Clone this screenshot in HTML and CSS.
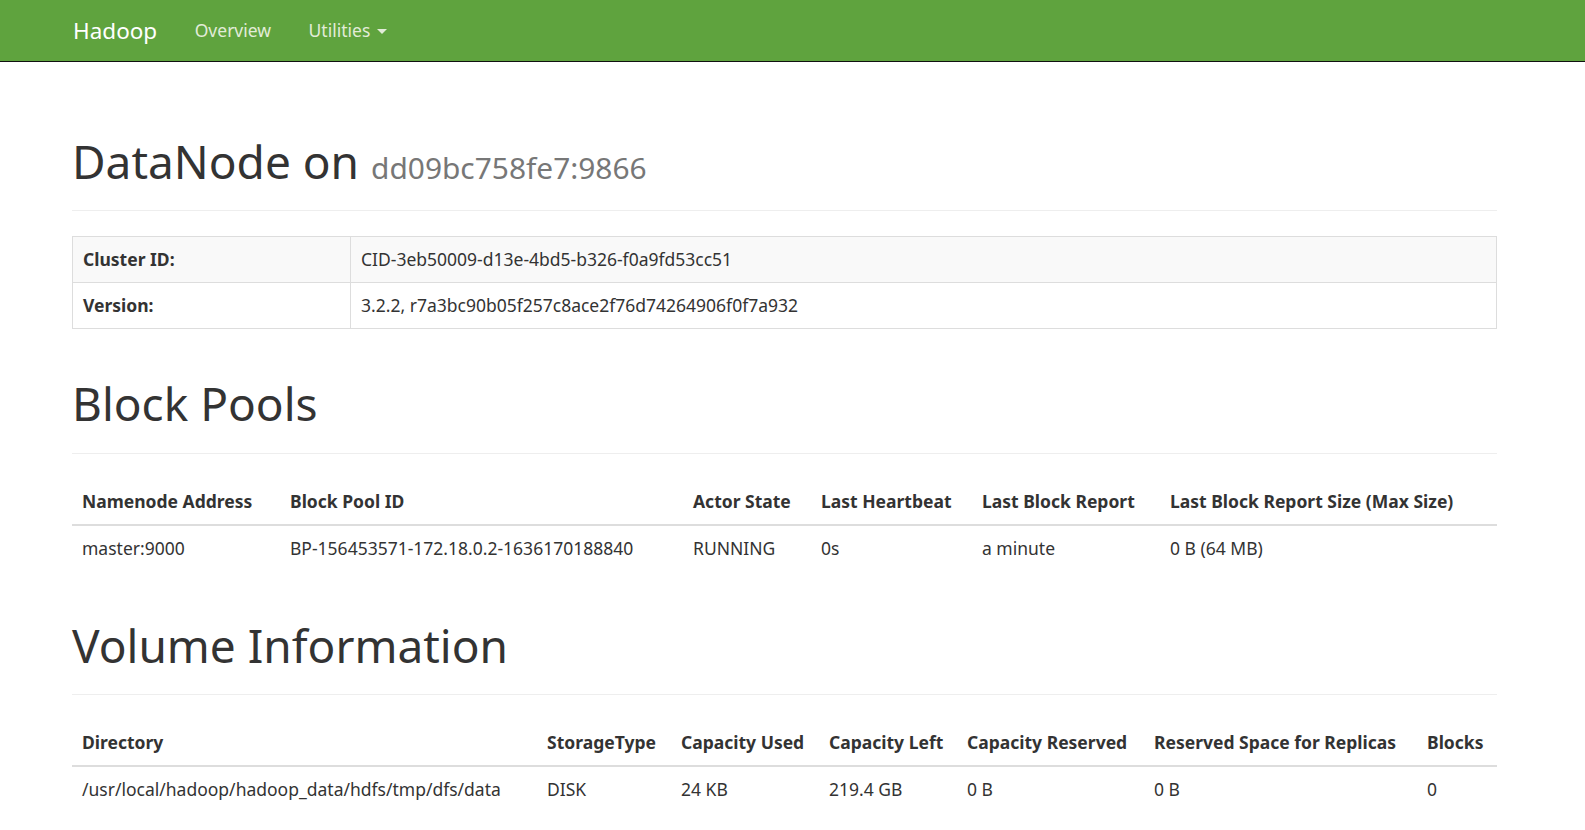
FILE: index.html
```html
<!DOCTYPE html>
<html lang="en">
<head>
<meta charset="utf-8">
<title>DataNode Information</title>
<link rel="stylesheet" href="styles.css">
</head>
<body>
<header class="navbar">
  <div class="container nav-inner">
    <a class="brand" href="#">Hadoop</a>
    <ul class="nav">
      <li><a href="#">Overview</a></li>
      <li><a href="#">Utilities <span class="caret"></span></a></li>
    </ul>
  </div>
</header>
<main class="container">
  <div class="page-header first">
    <h1>DataNode on <small>dd09bc758fe7:9866</small></h1>
  </div>
  <table class="table table-bordered table-striped info">
    <tbody>
      <tr><th class="info-key">Cluster ID:</th><td>CID-3eb50009-d13e-4bd5-b326-f0a9fd53cc51</td></tr>
      <tr><th class="info-key">Version:</th><td>3.2.2, r7a3bc90b05f257c8ace2f76d74264906f0f7a932</td></tr>
    </tbody>
  </table>

  <div class="page-header">
    <h1>Block Pools</h1>
  </div>
  <table class="table pools">
    <thead>
      <tr>
        <th class="p1">Namenode Address</th>
        <th class="p2">Block Pool ID</th>
        <th class="p3">Actor State</th>
        <th class="p4">Last Heartbeat</th>
        <th class="p5">Last Block Report</th>
        <th class="p6">Last Block Report Size (Max Size)</th>
      </tr>
    </thead>
    <tbody>
      <tr>
        <td>master:9000</td>
        <td>BP-156453571-172.18.0.2-1636170188840</td>
        <td>RUNNING</td>
        <td>0s</td>
        <td>a minute</td>
        <td>0 B (64 MB)</td>
      </tr>
    </tbody>
  </table>

  <div class="page-header">
    <h1>Volume Information</h1>
  </div>
  <table class="table volumes">
    <thead>
      <tr>
        <th class="v1">Directory</th>
        <th class="v2">StorageType</th>
        <th class="v3">Capacity Used</th>
        <th class="v4">Capacity Left</th>
        <th class="v5">Capacity Reserved</th>
        <th class="v6">Reserved Space for Replicas</th>
        <th class="v7">Blocks</th>
      </tr>
    </thead>
    <tbody>
      <tr>
        <td>/usr/local/hadoop/hadoop_data/hdfs/tmp/dfs/data</td>
        <td>DISK</td>
        <td>24 KB</td>
        <td>219.4 GB</td>
        <td>0 B</td>
        <td>0 B</td>
        <td>0</td>
      </tr>
    </tbody>
  </table>
</main>
</body>
</html>
```
FILE: styles.css
```css
* { box-sizing: border-box; }
html, body {
  margin: 0;
  padding: 0;
  background: #fff;
}
body {
  font-family: "Noto Sans", "Open Sans", "Liberation Sans", sans-serif;
  font-size: 17.5px;
  line-height: 25px;
  color: #333;
}
.container {
  width: 1425px;
  margin-left: 72px;
}
.navbar {
  background: #5fa33e;
  height: 62px;
  border-bottom: 1px solid #111;
}
.nav-inner {
  display: flex;
  align-items: center;
  height: 60px;
}
.brand {
  color: #fff;
  text-decoration: none;
  font-size: 22.5px;
  line-height: 25px;
  padding: 0 18.75px 0 1px;
}
.nav {
  display: flex;
  list-style: none;
  margin: 0;
  padding: 0;
}
.nav a {
  display: block;
  color: #e2ecd8;
  text-decoration: none;
  font-size: 17.5px;
  line-height: 25px;
  padding: 0 18.75px;
}
.caret {
  display: inline-block;
  width: 0;
  height: 0;
  margin-left: 2px;
  vertical-align: middle;
  border-top: 5px solid #e2ecd8;
  border-left: 5px solid transparent;
  border-right: 5px solid transparent;
}
.page-header {
  margin: 50px 0 25px;
  padding-bottom: 11.25px;
  border-bottom: 1px solid #eee;
}
.page-header.first {
  margin-top: 75px;
}
h1 {
  margin: 0 0 12.5px;
  font-size: 46px;
  line-height: 49.5px;
  font-weight: 400;
  color: #333;
}
h1 small {
  font-size: 65%;
  color: #777;
  font-weight: 400;
  line-height: 1;
}
.table {
  width: 100%;
  border-collapse: collapse;
  border-spacing: 0;
  margin-bottom: 25px;
}
.table th, .table td {
  padding: 10px;
  text-align: left;
  vertical-align: top;
  line-height: 25px;
}
.table th { font-weight: 700; }
.table tbody td, .table tbody th {
  border-top: 1px solid #ddd;
}
.table thead th {
  border-bottom: 2.5px solid #ddd;
  vertical-align: bottom;
}
.table-bordered, .table-bordered th, .table-bordered td,
.table-bordered tbody td, .table-bordered tbody th {
  border: 1.25px solid #ddd;
}
.table-striped tbody tr:nth-child(odd) { background: #f9f9f9; }
.info-key { width: 278px; }
.pools { table-layout: fixed; }
.p1 { width: 208px; }
.p2 { width: 403px; }
.p3 { width: 128px; }
.p4 { width: 161px; }
.p5 { width: 188px; }
.volumes { table-layout: fixed; }
.v1 { width: 465px; }
.v2 { width: 134px; }
.v3 { width: 148px; }
.v4 { width: 138px; }
.v5 { width: 187px; }
.v6 { width: 273px; }
```
